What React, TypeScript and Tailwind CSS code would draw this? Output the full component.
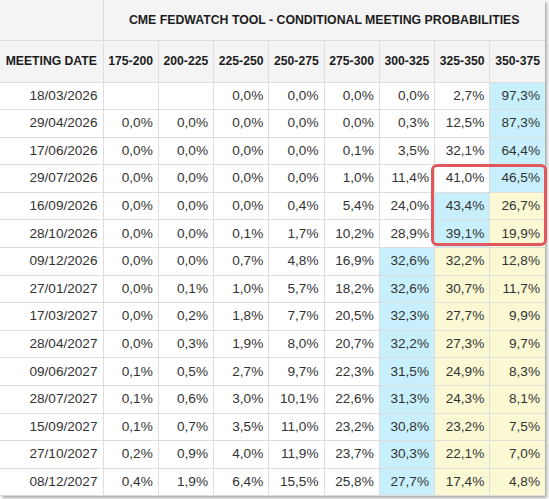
import React from "react";

const ranges = [
  "175-200",
  "200-225",
  "225-250",
  "250-275",
  "275-300",
  "300-325",
  "325-350",
  "350-375",
];

// c = cyan cell, y = yellow cell, "" = white
const rows: { date: string; values: string[]; hl: string[] }[] = [
  { date: "18/03/2026", values: ["", "", "0,0%", "0,0%", "0,0%", "0,0%", "2,7%", "97,3%"], hl: ["", "", "", "", "", "", "", "c"] },
  { date: "29/04/2026", values: ["0,0%", "0,0%", "0,0%", "0,0%", "0,0%", "0,3%", "12,5%", "87,3%"], hl: ["", "", "", "", "", "", "", "c"] },
  { date: "17/06/2026", values: ["0,0%", "0,0%", "0,0%", "0,0%", "0,1%", "3,5%", "32,1%", "64,4%"], hl: ["", "", "", "", "", "", "", "c"] },
  { date: "29/07/2026", values: ["0,0%", "0,0%", "0,0%", "0,0%", "1,0%", "11,4%", "41,0%", "46,5%"], hl: ["", "", "", "", "", "", "", "c"] },
  { date: "16/09/2026", values: ["0,0%", "0,0%", "0,0%", "0,4%", "5,4%", "24,0%", "43,4%", "26,7%"], hl: ["", "", "", "", "", "", "c", "y"] },
  { date: "28/10/2026", values: ["0,0%", "0,0%", "0,1%", "1,7%", "10,2%", "28,9%", "39,1%", "19,9%"], hl: ["", "", "", "", "", "", "c", "y"] },
  { date: "09/12/2026", values: ["0,0%", "0,0%", "0,7%", "4,8%", "16,9%", "32,6%", "32,2%", "12,8%"], hl: ["", "", "", "", "", "c", "y", "y"] },
  { date: "27/01/2027", values: ["0,0%", "0,1%", "1,0%", "5,7%", "18,2%", "32,6%", "30,7%", "11,7%"], hl: ["", "", "", "", "", "c", "y", "y"] },
  { date: "17/03/2027", values: ["0,0%", "0,2%", "1,8%", "7,7%", "20,5%", "32,3%", "27,7%", "9,9%"], hl: ["", "", "", "", "", "c", "y", "y"] },
  { date: "28/04/2027", values: ["0,0%", "0,3%", "1,9%", "8,0%", "20,7%", "32,2%", "27,3%", "9,7%"], hl: ["", "", "", "", "", "c", "y", "y"] },
  { date: "09/06/2027", values: ["0,1%", "0,5%", "2,7%", "9,7%", "22,3%", "31,5%", "24,9%", "8,3%"], hl: ["", "", "", "", "", "c", "y", "y"] },
  { date: "28/07/2027", values: ["0,1%", "0,6%", "3,0%", "10,1%", "22,6%", "31,3%", "24,3%", "8,1%"], hl: ["", "", "", "", "", "c", "y", "y"] },
  { date: "15/09/2027", values: ["0,1%", "0,7%", "3,5%", "11,0%", "23,2%", "30,8%", "23,2%", "7,5%"], hl: ["", "", "", "", "", "c", "y", "y"] },
  { date: "27/10/2027", values: ["0,2%", "0,9%", "4,0%", "11,9%", "23,7%", "30,3%", "22,1%", "7,0%"], hl: ["", "", "", "", "", "c", "y", "y"] },
  { date: "08/12/2027", values: ["0,4%", "1,9%", "6,4%", "15,5%", "25,8%", "27,7%", "17,4%", "4,8%"], hl: ["", "", "", "", "", "c", "y", "y"] },
];

const cellBg = (h: string) =>
  h === "c" ? "bg-[#c8f0fc]" : h === "y" ? "bg-[#fbf9d4]" : "bg-white";

export default function App() {
  return (
    <div className="w-[549px] h-[499px] bg-white font-['Liberation_Sans',Arial,sans-serif]">
      <div className="relative w-[545px] shadow-[2px_2px_3px_rgba(0,0,0,0.35)]">
        <table className="w-[545px] table-fixed border-collapse">
          <colgroup>
            <col className="w-[103px]" />
            {ranges.map((r) => (
              <col key={r} />
            ))}
          </colgroup>
          <thead>
            {/* title row */}
            <tr className="h-[40px] bg-[#f4f4f4]">
              <th className="border-b border-r border-[#dedede]" />
              <th
                colSpan={8}
                className="border-b border-[#dedede] text-center text-[12.3px] font-bold text-[#1c1c1c]"
              >
                CME FEDWATCH TOOL - CONDITIONAL MEETING PROBABILITIES
              </th>
            </tr>
            <tr className="h-[42px] bg-[#f4f4f4]">
              <th className="border-b border-r border-[#dedede] text-center text-[12.2px] font-bold text-[#1c1c1c] whitespace-nowrap">
                MEETING DATE
              </th>
              {ranges.map((r, i) => (
                <th
                  key={r}
                  className={`border-b border-[#dedede] text-center text-[12.2px] font-bold text-[#1c1c1c] ${
                    i < 7 ? "border-r" : ""
                  }`}
                >
                  {r}
                </th>
              ))}
            </tr>
          </thead>
          <tbody>
            {rows.map((row) => (
              <tr key={row.date} className="h-[27.6px]">
                <td className="border-b border-r border-[#dedede] bg-white pr-[5px] text-right text-[13.6px] text-[#333]">
                  {row.date}
                </td>
                {row.values.map((v, i) => (
                  <td
                    key={i}
                    className={`border-b border-[#dedede] pr-[5px] text-right text-[13.6px] text-[#333] ${cellBg(
                      row.hl[i]
                    )} ${i < 7 ? "border-r" : ""}`}
                  >
                    {v}
                  </td>
                ))}
              </tr>
            ))}
          </tbody>
        </table>
        {/* highlight frame */}
        <div className="absolute left-[431px] top-[164px] w-[116px] h-[82px] rounded-[6px] border-[3px] border-[#e2575c]" />
      </div>
    </div>
  );
}
